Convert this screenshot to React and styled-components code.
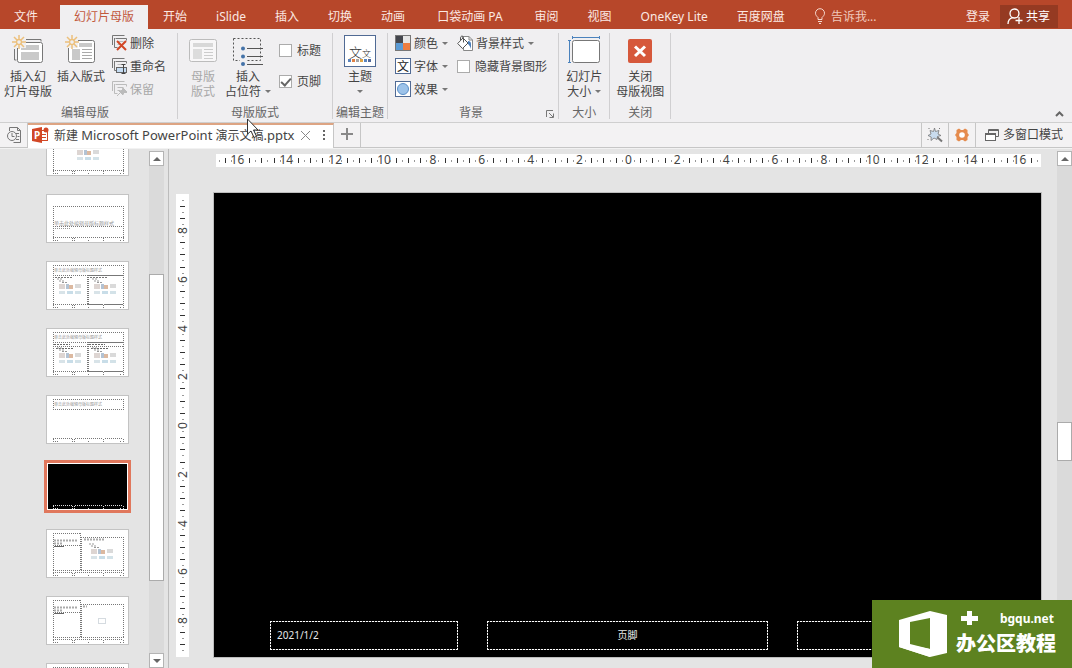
import React, { useState } from 'react';
import styled, { createGlobalStyle, css } from 'styled-components';

const GlobalStyle = createGlobalStyle`
  * {
    box-sizing: border-box;
  }
  body {
    margin: 0;
    font-family: "Noto Sans", "Noto Sans CJK SC", sans-serif;
    font-size: 12px;
    line-height: 15px;
    color: #444;
  }
  button {
    background: transparent;
    border: 0;
    padding: 0;
    font: inherit;
    color: inherit;
    white-space: nowrap;
  }
  svg {
    display: block;
    flex: none;
  }
`;

const Window = styled.div`
  position: relative;
  display: flex;
  flex-direction: column;
  height: 100vh;
  overflow: hidden;
  background: #e4e4e4;
`;

/* title bar */

const TitleBar = styled.header`
  display: flex;
  align-items: flex-end;
  height: 29px;
  padding-right: 14px;
  background: #b7472a;
  color: #fbe9e3;
`;

const Tabs = styled.nav`
  display: flex;
  flex: 1;
`;

const MenuTab = styled.button`
  height: 24px;
  padding: 0 ${(props) => (props.$wide ? 17 : 14)}px 2px;
  margin-right: 1px;
  background: ${(props) => (props.$active ? '#f0eff1' : 'transparent')};
  color: ${(props) => (props.$active ? '#c2583d' : 'inherit')};

  &:first-child {
    margin-right: 8px;
  }
`;

const TellMe = styled.button`
  display: flex;
  align-items: center;
  gap: 5px;
  height: 24px;
  padding: 0 14px 2px;
  color: #f0c9bc;
`;

const SignIn = styled.button`
  height: 24px;
  padding: 0 10px 2px;
`;

const Share = styled.button`
  display: flex;
  align-items: center;
  gap: 2px;
  height: 23px;
  margin-bottom: 1px;
  padding: 0 8px 1px 6px;
  background: #953a22;
  color: #fff;
`;

/* ribbon */

const RibbonBar = styled.div`
  display: flex;
  position: relative;
  height: 93px;
  padding: 4px 0 3px;
  background: #f0eff1;
`;

const Group = styled.section`
  display: flex;
  flex-direction: column;
  position: relative;
  border-right: 1px solid #d0cfd1;
  padding: ${(props) => props.$pad || '0 7px'};
`;

const GroupBody = styled.div`
  display: flex;
  height: 72px;
  gap: ${(props) => props.$gap || 0}px;
`;

const GroupLabel = styled.div`
  height: 14px;
  line-height: 16px;
  text-align: center;
  white-space: nowrap;
  color: #666;
`;

const BigButton = styled.button`
  display: flex;
  flex-direction: column;
  align-items: center;
  color: ${(props) => (props.disabled ? '#a8a8a8' : '#444')};
`;

const BigIcon = styled.span`
  display: flex;
  align-items: center;
  height: 36px;
`;

const Line = styled.span`
  display: flex;
  align-items: center;
  gap: 4px;
  height: 15px;
`;

const Column = styled.div`
  display: flex;
  flex-direction: column;
  gap: 1px;
  margin-top: -1px;
  padding-left: ${(props) => (props.$inset ? 2 : 0)}px;
`;

const SmallButton = styled.button`
  display: flex;
  align-items: center;
  gap: 3px;
  height: 22px;
  color: ${(props) => (props.disabled ? '#a8a8a8' : '#444')};
`;

const CheckColumn = styled.div`
  display: flex;
  flex-direction: column;
  gap: 9px;
  padding-top: 6px;
`;

const CheckLabel = styled.label`
  display: flex;
  align-items: center;
  gap: 5px;
  height: 22px;
  white-space: nowrap;
`;

const CheckBox = styled.input`
  appearance: none;
  display: grid;
  place-items: center;
  width: 13px;
  height: 13px;
  margin: 0;
  border: 1px solid #ababab;
  background: #fff;

  &:checked::after {
    content: '';
    width: 4px;
    height: 8px;
    border: solid #666;
    border-width: 0 2px 2px 0;
    transform: rotate(42deg);
    margin-bottom: 2px;
  }
`;

const Caret = styled.i`
  width: 5px;
  border: solid transparent;
  border-width: 3px 3px 0;
  border-top-color: #777;
  margin-left: ${(props) => props.$space || 0}px;
`;

const Launcher = styled.button`
  position: absolute;
  right: 4px;
  bottom: 1px;
`;

const Collapse = styled.button`
  position: absolute;
  right: 8px;
  bottom: 5px;
`;

/* document tabs */

const DocBar = styled.div`
  display: flex;
  flex: none;
  height: 26px;
  border-top: 1px solid #cfcfcf;
  border-bottom: 1px solid #c6c6c6;
  background: #f3f2f3;
`;

const DocButton = styled.button`
  display: flex;
  align-items: center;
  justify-content: center;
  gap: 4px;
  width: ${(props) => props.$width || 27}px;
  padding-bottom: 1px;
  border: solid #c6c6c6;
  border-width: ${(props) => (props.$side === 'left' ? '0 0 0 1px' : '0 1px 0 0')};
`;

const DocTab = styled.div`
  display: flex;
  align-items: center;
  min-width: 306px;
  padding: 0 7px 3px 4px;
  gap: 5px;
  border-top: 2px solid #dda483;
  border-right: 1px solid #c6c6c6;
  background: #fff;
  margin-bottom: -1px;
  white-space: nowrap;
`;

const DocName = styled.span`
  flex: 1;
  color: #444;
`;

const Latin = styled.span`
  font-size: 13px;
`;

const TabTools = styled.div`
  display: flex;
  align-items: center;
  gap: 11px;
`;

const Spacer = styled.div`
  flex: 1;
`;

/* workspace */

const Workspace = styled.div`
  display: flex;
  flex: 1;
  min-height: 0;
  border-top: 1px solid #f2f2f2;
`;

const ThumbPane = styled.aside`
  display: flex;
  flex: none;
  width: 169px;
  padding-right: 4px;
  border-right: 1px solid #bcbcbc;
`;

const ThumbList = styled.div`
  display: flex;
  flex-direction: column;
  flex: 1;
  align-items: flex-end;
  gap: 18px;
  overflow: hidden;
  padding-right: 20px;

  &::before {
    content: '';
    margin-top: -40px;
  }
`;

const Thumb = styled.button`
  flex: none;
  width: 83px;
  height: 49px;
  border: 1px solid #c3c3c3;
  background: #fff;

  ${(props) =>
    props.$selected &&
    css`
      border-color: #e0775c;
      background: #000;
      box-shadow: 0 0 0 2px #e0775c, inset 0 0 0 1px #fff;
    `}
`;

const ScrollBar = styled.div`
  display: flex;
  flex-direction: column;
  flex: none;
  width: 15px;
  padding-top: 2px;
`;

const ScrollButton = styled.button`
  display: grid;
  place-items: center;
  height: 15px;
  border: 1px solid #b4b4b4;
  background: #fff;
`;

const Track = styled.div`
  flex: ${(props) => props.$size} 1 0;
  background: #dadada;
`;

const Handle = styled.div`
  flex: ${(props) => props.$size} 1 0;
  border: 1px solid #ababab;
  background: #fff;
`;

const Canvas = styled.main`
  display: grid;
  flex: 1;
  grid-template-columns: 13px 1fr;
  grid-template-rows: 13px auto;
  gap: 25px 24px;
  align-content: start;
  padding: 5px 15px 0 7px;
`;

const RulerBar = styled.div`
  display: flex;
  flex-direction: ${(props) => (props.$vertical ? 'column' : 'row')};
  grid-column: ${(props) => (props.$vertical ? 1 : 2)};
  margin: ${(props) => (props.$vertical ? '2px 0 1px' : '0 1px 0 3px')};
  padding: ${(props) => (props.$vertical ? '3px 0' : '0')};
  background: #fff;
`;

const RulerCell = styled.span`
  display: flex;
  flex: 1 1 0;
  min-width: 0;
  min-height: 0;
  align-items: center;
  justify-content: center;
`;

const Tick = styled.i`
  flex: none;
  width: ${(props) => (props.$vertical ? (props.$long ? 5 : 2) : 1)}px;
  height: ${(props) => (props.$vertical ? 1 : props.$long ? 5 : 2)}px;
  background: ${(props) => (props.$long ? '#333' : '#999')};
`;

const RulerNumber = styled.span`
  flex: none;
  line-height: 13px;
  color: #444;
  ${(props) =>
    props.$vertical
      ? css`
          writing-mode: vertical-rl;
          transform: rotate(180deg);
        `
      : css`
          padding-bottom: 2px;
        `}
`;

const Slide = styled.div`
  display: grid;
  grid-template-columns: 188fr 281fr 188fr;
  align-items: end;
  gap: 29px;
  aspect-ratio: 16 / 9;
  padding: 0 56px 7px;
  border: 1px solid #bdbdbd;
  background: #000;
`;

const dashX = 'repeating-linear-gradient(90deg, #fff 0 2px, #333 2px 3px)';
const dashY = 'repeating-linear-gradient(180deg, #fff 0 2px, #333 2px 3px)';

const Placeholder = styled.div`
  height: 29px;
  padding: 0 7px;
  line-height: 29px;
  font-size: 10px;
  text-align: ${(props) => (props.$center ? 'center' : 'left')};
  color: #e8e8e8;
  background: ${dashX} top / 100% 1px no-repeat, ${dashX} bottom / 100% 1px no-repeat,
    ${dashY} left / 1px 100% no-repeat, ${dashY} right / 1px 100% no-repeat;
`;

/* things that lie over the window */

const Badge = styled.div`
  position: absolute;
  right: 0;
  bottom: 0;
  display: flex;
  align-items: center;
  gap: 8px;
  width: 200px;
  height: 68px;
  padding-left: 27px;
  background: #5d8220;
  color: #fff;
  font-weight: 700;
`;

const BadgeText = styled.div`
  display: flex;
  flex-direction: column;
`;

const BadgeTop = styled.div`
  display: flex;
  align-items: center;
  justify-content: space-between;
  height: 20px;
  padding: 0 2px 0 5px;
`;

const BadgeName = styled.div`
  font-size: 20px;
  line-height: 32px;
  font-weight: 900;
`;

const Cursor = styled.svg`
  position: absolute;
  left: 246px;
  top: 118px;
`;

/* icons */

const Star = () => (
  <path
    d="M7 0v4M7 10v4M0 7h4M10 7h4M2 2l3 3M9 9l3 3M12 2l-3 3M2 12l3-3M4.500 7a2.500 2.500 0 1 0 5 0a2.500 2.500 0 1 0-5 0"
    stroke="#ecc07c"
    strokeWidth="1.500"
    fill="none"
  />
);

const InsertMasterIcon = () => (
  <svg width="32" height="32" fill="none">
    <path d="M2.500 14v11h2M14 4.500h15v2" stroke="#777" />
    <rect x="5.500" y="7.500" width="25" height="20" rx="2" fill="#fff" stroke="#777" />
    <rect x="9" y="10" width="18" height="5" fill="#c9c9c9" />
    <rect x="9" y="17" width="18" height="8" fill="#c9c9c9" />
    <rect x="0" y="0" width="14" height="13" fill="#f0eff1" />
    <Star />
  </svg>
);

const InsertLayoutIcon = () => (
  <svg width="32" height="32" fill="none">
    <rect x="3.500" y="5.500" width="26" height="22" rx="2" fill="#fff" stroke="#777" />
    <rect x="14" y="8" width="13" height="4" fill="#c9c9c9" />
    <rect x="7" y="14" width="8" height="11" fill="#c9c9c9" />
    <path d="M17 14.500h10M17 17.500h10M17 20.500h10M17 23.500h10" stroke="#aaa" />
    <rect x="0" y="0" width="13" height="13" fill="#f0eff1" />
    <Star />
  </svg>
);

const MasterLayoutIcon = () => (
  <svg width="28" height="24" fill="none">
    <rect x=".5" y=".5" width="27" height="22" rx="2" fill="#f8f7f8" stroke="#bcbcbc" />
    <rect x="4" y="4" width="20" height="4" fill="#d8d8d8" />
    <rect x="4" y="10" width="9" height="10" fill="#dcdcdc" />
    <path d="M15 10.500h9M15 13.500h9M15 16.500h9M15 19.500h9" stroke="#ccc" />
  </svg>
);

const PlaceholderIcon = () => (
  <svg width="32" height="30" fill="none">
    <rect x="1.500" y="2.500" width="27" height="22" stroke="#555" strokeDasharray="2 2" />
    <path d="M15 12.500h16M15 20.500h16M15 28.500h16" stroke="#555" />
    <rect x="8" y="9" width="7" height="21" fill="#f0eff1" />
    <circle cx="11" cy="12.500" r="2" fill="#4472a8" />
    <circle cx="11" cy="20.500" r="2" fill="#4472a8" />
    <circle cx="11" cy="28" r="2" fill="#4472a8" />
  </svg>
);

const LayoutBack = ({ color }) => (
  <g stroke={color} fill="none">
    <path d="M.5 10V.5H12.500M3.500 3.500h11v2M2.500 3v9.500h3" />
    <path d="M5.500 6.500h6M5.500 9.500h3" stroke="#bbb" />
  </g>
);

const DeleteIcon = () => (
  <svg width="15" height="16">
    <LayoutBack color="#777" />
    <path d="M5 6l9 9M14 6l-9 9" stroke="#d24726" strokeWidth="2" />
  </svg>
);

const RenameIcon = () => (
  <svg width="15" height="16" fill="none">
    <LayoutBack color="#777" />
    <rect x="4.500" y="9.500" width="10" height="5" fill="#c5dcf3" stroke="#666" />
    <path d="M11.500 7v9M9.500 6.500h4M9.500 15.500h4" stroke="#444" />
  </svg>
);

const PreserveIcon = () => (
  <svg width="15" height="16" fill="none">
    <LayoutBack color="#bbb" />
    <path d="M10 6l5 5-1 1-1-1-2 2v1l-4-4h2l2-2zM8 12l-3 3" fill="#bbb" stroke="#bbb" />
  </svg>
);

const ThemeIcon = () => (
  <svg width="32" height="32">
    <rect x=".5" y=".5" width="31" height="31" fill="#fff" stroke="#506a94" />
    <text x="5" y="22" fontSize="13" fontWeight="300" fill="#333">文</text>
    <text x="18" y="22" fontSize="9" fontWeight="300" fill="#333">文</text>
    <rect x="4" y="24" width="3" height="3" fill="#5b84bd" />
    <rect x="8" y="24" width="3" height="3" fill="#e08044" />
    <rect x="12" y="24" width="3" height="3" fill="#a5a5a5" />
    <rect x="16" y="24" width="3" height="3" fill="#e0a544" />
    <rect x="20" y="24" width="3" height="3" fill="#5b84bd" />
    <rect x="24" y="24" width="3" height="3" fill="#526a9c" />
  </svg>
);

const ColorsIcon = () => (
  <svg width="16" height="16">
    <rect width="16" height="16" fill="#777" />
    <rect x="1" y="1" width="7" height="7" fill="#44464d" />
    <rect x="8" y="1" width="7" height="7" fill="#e6e6e6" />
    <rect x="1" y="8" width="7" height="7" fill="#5b9bd5" />
    <rect x="8" y="8" width="7" height="7" fill="#ed7d41" />
  </svg>
);

const FontsIcon = () => (
  <svg width="16" height="16">
    <rect x=".5" y=".5" width="15" height="15" fill="#fff" stroke="#506a94" />
    <text x="2" y="13" fontSize="12" fill="#222">文</text>
  </svg>
);

const EffectsIcon = () => (
  <svg width="16" height="16">
    <rect x=".5" y=".5" width="15" height="15" fill="#fff" stroke="#506a94" />
    <circle cx="8" cy="8" r="5.500" fill="#9dc3ea" stroke="#5b8fc8" />
  </svg>
);

const BackgroundIcon = () => (
  <svg width="16" height="16" fill="none">
    <path d="M5.500 5V1.500h6.500l3.500 3.500v10.500h-9v-3" fill="#fff" stroke="#888" />
    <path d="M12 1.500v3.500h3.500" stroke="#888" />
    <path d="M11 6c2 0 3 1 3 3v5c-1-3-2-4-3-5z" fill="#4a7ebb" />
    <path d="M.7 8.500L6 3l5 5-5.500 5.500z" fill="#fff" stroke="#555" />
    <path d="M6.500 7.500V3c0-2.500-3-2.500-3 0v2" stroke="#555" />
  </svg>
);

const SlideSizeIcon = () => (
  <svg width="32" height="30" fill="none">
    <rect x="4.500" y="4.500" width="27" height="22" rx="2" fill="#fff" stroke="#777" />
    <path d="M4 1.500h27M4.500 0v3M31.500 0v3M1.500 4v22M0 4.500h3M0 26.500h3" stroke="#4a82bd" />
  </svg>
);

const CloseMasterIcon = () => (
  <svg width="24" height="24">
    <rect width="24" height="24" rx="2" fill="#d6583b" />
    <path d="M7 7.500l10 9.500M17 7.500L7 17" stroke="#fff" strokeWidth="3" />
  </svg>
);

const BulbIcon = () => (
  <svg width="12" height="16" fill="none" stroke="#f6d9cf">
    <path d="M4 11.500V9.500C2.500 8 1.500 7 1.500 5.200a4.500 4.500 0 0 1 9 0C10.500 7 9.500 8 8 9.500v2zM4 13.500h4M5 15.500h2" />
  </svg>
);

const PersonIcon = () => (
  <svg width="18" height="18" fill="none" stroke="#fff" strokeWidth="1.300">
    <circle cx="8.500" cy="6.500" r="4.500" />
    <path d="M2 17c0-3.500 2-5.500 4.500-6.300M13 10v7M9.500 13.500h7" />
  </svg>
);

const RecentIcon = () => (
  <svg width="16" height="18" fill="none" stroke="#777">
    <path d="M3.500 5V1.500h8l3 3v12h-7M11.500 1.500v3h3M10 7.500h3M11.500 10.500h2M10 13.500h3" />
    <circle cx="6" cy="10" r="4.500" fill="#f3f2f3" />
    <path d="M6 7v3.500h2.500" />
  </svg>
);

const PptIcon = () => (
  <svg width="17" height="16">
    <rect x="8" y="3.500" width="7.500" height="10" fill="#fff" stroke="#d24726" />
    <circle cx="14" cy="3" r="2.500" fill="#d24726" />
    <path d="M10 7.500h4M10 10.500h4" stroke="#d24726" />
    <path d="M0 2l10-2v16L0 14z" fill="#d24726" />
    <text x="2" y="12" fontSize="10" fontWeight="700" fill="#fff">P</text>
  </svg>
);

const CrossIcon = () => (
  <svg width="11" height="11" stroke="#888">
    <path d="M1 1l9 9M10 1l-9 9" />
  </svg>
);

const DotsIcon = () => (
  <svg width="4" height="12" fill="#666">
    <rect x="1" y="1" width="2" height="2" />
    <rect x="1" y="5" width="2" height="2" />
    <rect x="1" y="9" width="2" height="2" />
  </svg>
);

const PlusIcon = () => (
  <svg width="13" height="13" stroke="#888" strokeWidth="2">
    <path d="M6 0v12M0 6h12" />
  </svg>
);

const WandIcon = () => (
  <svg width="16" height="16" fill="none" stroke="#777">
    <path d="M9.500 9.500l5.500 5" strokeWidth="2" />
    <path d="M7.500 1l1 3.500L12 3.500 11 7l3 1.500-3.500 1-.5 3-3-1.500L4 13.500 4.200 10 1 8.500 4 7 3 3.500l3.500 1z" fill="#c9dcee" strokeWidth=".8" />
    <path d="M2 1v1M12.500 1v1M1 12v1" />
  </svg>
);

const GearIcon = () => (
  <svg width="14" height="14">
    <path d="M4 0.500L6 2h2l2-1.500L12.500 2v3L14 7l-1.500 2v3L10 13.500 8 12H6l-2 1.500L1.500 12V9L0 7l1.500-2V2z" fill="#e58b4d" />
    <circle cx="7" cy="7" r="2.800" fill="#fff" />
  </svg>
);

const WindowsIcon = () => (
  <svg width="14" height="12" fill="none" stroke="#666">
    <path d="M3.500 4V.5h10v7H11" />
    <rect x=".5" y="4.500" width="10" height="7" fill="#fff" />
    <path d="M1 5.500h9M4 1.500h9" />
  </svg>
);

const LauncherIcon = () => (
  <svg width="8" height="8" fill="none" stroke="#777">
    <path d="M.5 7V.5H7M3 3l4 4M7.500 3.500v4h-4" />
  </svg>
);

const ChevronUp = () => (
  <svg width="9" height="6" fill="none" stroke="#666" strokeWidth="2">
    <path d="M1 5l3.500-3.500L8 5" />
  </svg>
);

const Arrow = ({ down }) => (
  <svg width="8" height="4" fill="#666">
    <path d={down ? 'M0 0h8L4 4z' : 'M0 4h8L4 0z'} />
  </svg>
);

const OfficeLogo = () => (
  <svg width="49" height="46" fill="#fff">
    <path fillRule="evenodd" d="M0 9L31 0l17 4v38l-17 4L0 36zM11 11v23l20 4V7z" />
    <path d="M0 36l11-3 20 5v8z" />
  </svg>
);

/* layout thumbnails */

const TITLE = '单击此处编辑母版标题样式';

const Box = ({ x, y, w, h }) => (
  <path
    d={`M${x} ${y + 0.5}h${w + 1}M${x} ${y + h + 0.5}h${w + 1}M${x + 0.5} ${y}v${h + 1}M${x + w + 0.5} ${y}v${h + 1}`}
    strokeDasharray="1 1"
  />
);

const Caption = ({ y, size }) => (
  <text x="7" y={y} fontSize={size} fill="#999" stroke="none">{TITLE}</text>
);

const Media = ({ x, y }) => (
  <g stroke="none">
    <rect x={x} y={y} width="6" height="5" fill="#ddd5d2" />
    <rect x={x + 7} y={y} width="3" height="5" fill="#b3c3d4" />
    <rect x={x + 10} y={y + 1} width="4" height="4" fill="#dcb9a0" />
    <rect x={x + 16} y={y} width="6" height="4" fill="#dadada" />
    <rect x={x} y={y + 7} width="6" height="3" fill="#d8e3e8" />
    <rect x={x + 8} y={y + 7} width="6" height="3" fill="#c8dde8" />
    <rect x={x + 16} y={y + 7} width="6" height="3" fill="#d3e2e8" />
    <path d={`M${x - 2} ${y - 5}h5M${x} ${y - 3}h5M${x + 3} ${y - 1.5}h5`} stroke="#999" strokeDasharray="2 1" />
  </g>
);

const Footer = () => (
  <path d="M6.500 46v-3M6 42.500h20M25.500 46v-3M27.500 46v-3M28 42.500h28M56.500 46v-3M58 42.500h18M76.500 46v-3M8 45.500h3M41 45.500h2M73 45.500h2" strokeDasharray="1 1" />
);

const layouts = {
  content: (
    <>
      <Box x={6} y={3} w={70} h={9} />
      <Box x={6} y={13} w={70} h={29} />
      <Media x={30} y={22} />
    </>
  ),
  section: (
    <>
      <Box x={6} y={11} w={70} h={20} />
      <Box x={6} y={31} w={70} h={11} />
      <Caption y={30} size={5} />
      <path d="M8 33.500h15" stroke="#999" strokeDasharray="1 1" />
    </>
  ),
  two: (
    <>
      <Box x={6} y={3} w={70} h={10} />
      <Box x={6} y={13} w={34} h={29} />
      <Box x={41} y={13} w={35} h={29} />
      <Caption y={10} size={4} />
      <path d="M8 15.500h18M43 15.500h18" stroke="#777" strokeDasharray="2 1" />
      <Media x={12} y={22} />
      <Media x={47} y={22} />
    </>
  ),
  comparison: (
    <>
      <Box x={6} y={3} w={70} h={10} />
      <Box x={6} y={13} w={34} h={4} />
      <Box x={41} y={13} w={35} h={4} />
      <Box x={6} y={17} w={34} h={25} />
      <Box x={41} y={17} w={35} h={25} />
      <Caption y={10} size={4} />
      <path d="M7 15.500h16M42 15.500h16M9 19.500h18M44 19.500h18" stroke="#666" strokeDasharray="2 1" />
      <Media x={12} y={24} />
      <Media x={47} y={24} />
    </>
  ),
  title: (
    <>
      <Box x={6} y={3} w={70} h={10} />
      <Caption y={10} size={4} />
    </>
  ),
  blank: null,
  caption: (
    <>
      <Box x={6} y={3} w={27} h={12} />
      <Box x={6} y={15} w={27} h={25} />
      <Box x={34} y={7} w={42} h={33} />
      <path d="M7 10.500h24M7 13.500h8M37 9.500h21" stroke="#aaa" strokeWidth="2" strokeDasharray="2 1" />
      <path d="M7 16.500h10" stroke="#666" />
      <Media x={44} y={19} />
    </>
  ),
  picture: (
    <>
      <Box x={6} y={3} w={27} h={12} />
      <Box x={6} y={15} w={27} h={25} />
      <Box x={34} y={7} w={42} h={33} />
      <path d="M7 10.500h24M7 13.500h8M36 9.500h4" stroke="#aaa" strokeWidth="2" strokeDasharray="2 1" />
      <path d="M7 16.500h10" stroke="#666" />
      <rect x="51.500" y="21.500" width="7" height="5" stroke="#d5dbe0" />
    </>
  ),
};

const thumbs = ['content', 'section', 'two', 'comparison', 'title', 'blank', 'caption', 'picture', 'content'];

const menu = ['文件', '幻灯片母版', '开始', 'iSlide', '插入', '切换', '动画', '口袋动画 PA', '审阅', '视图', 'OneKey Lite', '百度网盘'];

function Ruler({ vertical, half }) {
  const cells = Array.from({ length: half * 2 + 1 }, (_, i) => Math.abs(i - half));
  return (
    <RulerBar $vertical={vertical}>
      {cells.map((n, i) => (
        <RulerCell key={i}>
          {n % 8 === 0 ? (
            <RulerNumber $vertical={vertical}>{n / 4}</RulerNumber>
          ) : (
            <Tick $vertical={vertical} $long={n % 2 === 0} />
          )}
        </RulerCell>
      ))}
    </RulerBar>
  );
}

function Scroll({ before, size, after, bottom }) {
  return (
    <ScrollBar>
      <ScrollButton aria-label="向上滚动"><Arrow /></ScrollButton>
      <Track $size={before} />
      <Handle $size={size} />
      <Track $size={after} />
      {bottom && <ScrollButton aria-label="向下滚动"><Arrow down /></ScrollButton>}
    </ScrollBar>
  );
}

function Check({ label, initial }) {
  const [checked, setChecked] = useState(Boolean(initial));
  return (
    <CheckLabel>
      <CheckBox type="checkbox" checked={checked} onChange={(e) => setChecked(e.target.checked)} />
      {label}
    </CheckLabel>
  );
}

function Ribbon() {
  return (
    <RibbonBar>
      <Group $pad="0 11px 0 4px">
        <GroupBody $gap={5}>
          <BigButton>
            <BigIcon><InsertMasterIcon /></BigIcon>
            <Line>插入幻</Line>
            <Line>灯片母版</Line>
          </BigButton>
          <BigButton>
            <BigIcon><InsertLayoutIcon /></BigIcon>
            <Line>插入版式</Line>
          </BigButton>
          <Column $inset>
            <SmallButton><DeleteIcon />删除</SmallButton>
            <SmallButton><RenameIcon />重命名</SmallButton>
            <SmallButton disabled><PreserveIcon />保留</SmallButton>
          </Column>
        </GroupBody>
        <GroupLabel>编辑母版</GroupLabel>
      </Group>
      <Group $pad="0 11px">
        <GroupBody $gap={8}>
          <BigButton disabled>
            <BigIcon><MasterLayoutIcon /></BigIcon>
            <Line>母版</Line>
            <Line>版式</Line>
          </BigButton>
          <BigButton>
            <BigIcon><PlaceholderIcon /></BigIcon>
            <Line>插入</Line>
            <Line>占位符<Caret /></Line>
          </BigButton>
          <CheckColumn>
            <Check label="标题" />
            <Check label="页脚" initial />
          </CheckColumn>
        </GroupBody>
        <GroupLabel>母版版式</GroupLabel>
      </Group>
      <Group $pad="0 3px">
        <GroupBody>
          <Spacer />
          <BigButton>
            <BigIcon><ThemeIcon /></BigIcon>
            <Line>主题</Line>
            <Line><Caret /></Line>
          </BigButton>
          <Spacer />
        </GroupBody>
        <GroupLabel>编辑主题</GroupLabel>
      </Group>
      <Group $pad="0 11px 0 7px">
        <GroupBody $gap={9}>
          <Column>
            <SmallButton><ColorsIcon />颜色<Caret $space={1} /></SmallButton>
            <SmallButton><FontsIcon />字体<Caret $space={1} /></SmallButton>
            <SmallButton><EffectsIcon />效果<Caret $space={1} /></SmallButton>
          </Column>
          <Column>
            <SmallButton><BackgroundIcon />背景样式<Caret $space={1} /></SmallButton>
            <Check label="隐藏背景图形" />
          </Column>
        </GroupBody>
        <GroupLabel>背景</GroupLabel>
        <Launcher aria-label="设置背景格式"><LauncherIcon /></Launcher>
      </Group>
      <Group>
        <GroupBody>
          <BigButton>
            <BigIcon><SlideSizeIcon /></BigIcon>
            <Line>幻灯片</Line>
            <Line>大小<Caret /></Line>
          </BigButton>
        </GroupBody>
        <GroupLabel>大小</GroupLabel>
      </Group>
      <Group $pad="0 6px">
        <GroupBody>
          <BigButton>
            <BigIcon><CloseMasterIcon /></BigIcon>
            <Line>关闭</Line>
            <Line>母版视图</Line>
          </BigButton>
        </GroupBody>
        <GroupLabel>关闭</GroupLabel>
      </Group>
      <Collapse aria-label="折叠功能区"><ChevronUp /></Collapse>
    </RibbonBar>
  );
}

function App() {
  const [tab, setTab] = useState('幻灯片母版');
  const [selected, setSelected] = useState(5);

  return (
    <Window>
      <GlobalStyle />
      <TitleBar>
        <Tabs>
          {menu.map((name) => (
            <MenuTab key={name} $active={name === tab} $wide={name.endsWith('PA')} onClick={() => setTab(name)}>
              {name}
            </MenuTab>
          ))}
          <TellMe><BulbIcon />告诉我...</TellMe>
        </Tabs>
        <SignIn>登录</SignIn>
        <Share><PersonIcon />共享</Share>
      </TitleBar>

      <Ribbon />

      <DocBar>
        <DocButton aria-label="最近文档" $width={28}><RecentIcon /></DocButton>
        <DocTab>
          <PptIcon />
          <DocName>新建 <Latin>Microsoft PowerPoint</Latin> 演示文稿<Latin>.pptx</Latin></DocName>
          <TabTools>
            <button aria-label="关闭文档"><CrossIcon /></button>
            <button aria-label="更多"><DotsIcon /></button>
          </TabTools>
        </DocTab>
        <DocButton aria-label="新建"><PlusIcon /></DocButton>
        <Spacer />
        <DocButton $side="left" aria-label="皮肤"><WandIcon /></DocButton>
        <DocButton $side="left" aria-label="设置"><GearIcon /></DocButton>
        <DocButton $side="left" $width={97}><WindowsIcon />多窗口模式</DocButton>
      </DocBar>

      <Workspace>
        <ThumbPane>
          <ThumbList>
            {thumbs.map((name, i) => (
              <Thumb key={i} $selected={i === selected} aria-label={`版式 ${i + 1}`} onClick={() => setSelected(i)}>
                <svg width="81" height="47" fill="none" stroke={name === 'blank' ? '#ddd' : '#777'}>
                  <g>{layouts[name]}</g>
                  <Footer />
                </svg>
              </Thumb>
            ))}
          </ThumbList>
          <Scroll before={110} size={309} after={73} bottom />
        </ThumbPane>
        <Canvas>
          <Ruler half={67} />
          <Ruler half={37} vertical />
          <Slide>
            <Placeholder>2021/1/2</Placeholder>
            <Placeholder $center>页脚</Placeholder>
            <Placeholder />
          </Slide>
        </Canvas>
        <Scroll before={258} size={37} after={208} />
      </Workspace>

      <Badge>
        <OfficeLogo />
        <BadgeText>
          <BadgeTop>
            <svg width="17" height="14" fill="#fff"><path d="M6 0h5v5h6v5h-6v4H6v-4H0V5h6z" /></svg>
            <span>bgqu.net</span>
          </BadgeTop>
          <BadgeName>办公区教程</BadgeName>
        </BadgeText>
      </Badge>
      <Cursor width="14" height="21">
        <path d="M1.500 1v15l3.500-3 3 6.500 2.500-1.200-3-6.300h4.500z" fill="#fff" stroke="#333" />
      </Cursor>
    </Window>
  );
}

export default App;
